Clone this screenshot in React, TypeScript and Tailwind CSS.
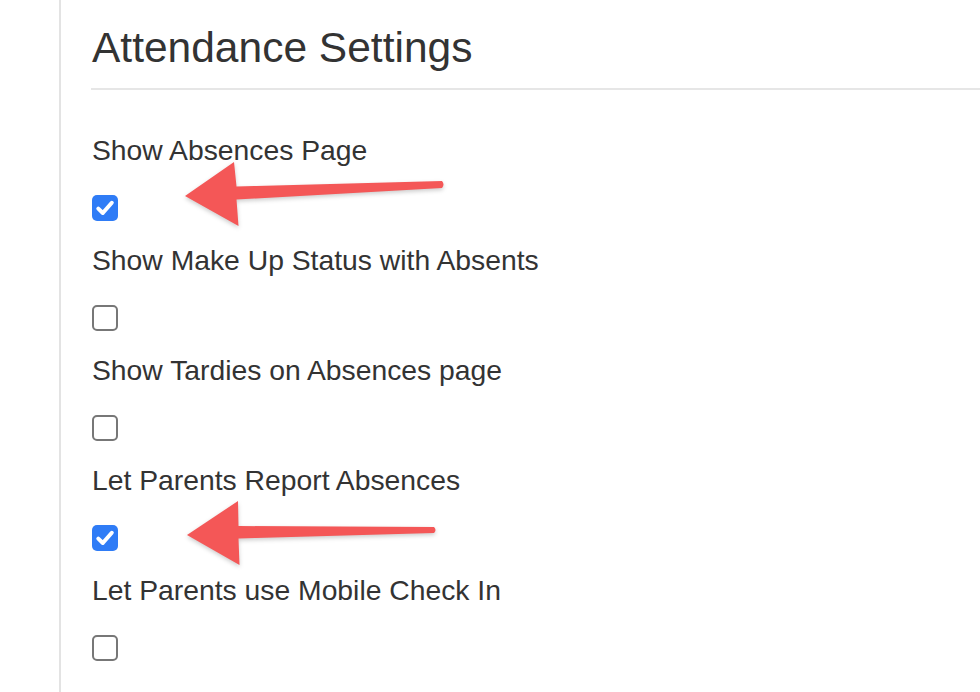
const settings = [
  { label: "Show Absences Page", checked: true },
  { label: "Show Make Up Status with Absents", checked: false },
  { label: "Show Tardies on Absences page", checked: false },
  { label: "Let Parents Report Absences", checked: true },
  { label: "Let Parents use Mobile Check In", checked: false },
];

const Checkbox = ({ checked }: { checked: boolean }) => {
  if (checked) {
    return (
      <div className="w-[26px] h-[26px] rounded-[5px] bg-[#2f7cf6] flex items-center justify-center">
        <svg width="26" height="26" viewBox="0 0 26 26">
          <path
            d="M6.3 13.6 L10.8 18 L19.8 7.8"
            fill="none"
            stroke="#fff"
            strokeWidth="4"
            strokeLinecap="round"
            strokeLinejoin="round"
          />
        </svg>
      </div>
    );
  }
  return <div className="w-[26px] h-[26px] rounded-[5px] border-2 border-[#777777] bg-white" />;
};

const Arrows = () => (
  <svg
    className="absolute inset-0 pointer-events-none drop-shadow-[0_2px_2px_rgba(0,0,0,0.2)]"
    width="980"
    height="692"
    viewBox="0 0 980 692"
  >
    {/* top arrow */}
    <path
      d="M185 196 L234 162 L236.5 186.5 L442 181 Q445 184.5 442 188 L236.5 199.5 L238.5 226 Z"
      fill="#f45757"
    />
    {/* bottom arrow */}
    <path
      d="M187 535 L238 501 L238.5 526 L434 527 Q437 530 434 533 L238.5 538.5 L239.5 565 Z"
      fill="#f45757"
    />
  </svg>
);

const App = () => {
  return (
    <main className="relative w-[980px] h-[692px] overflow-hidden bg-white font-['Liberation_Sans',Arial,sans-serif] text-[#333333]">
      <div className="ml-[59px] h-full border-l-2 border-[#e3e3e3] pl-[30px] pt-[24px]">
        <h1 className="ml-[1px] text-[42.5px] leading-[48px] font-normal">
          Attendance Settings
        </h1>
        <hr className="mt-[16px] border-0 h-[2px] bg-[#e6e6e6]" />
        <section className="mt-[40px] ml-[1px]">
          {settings.map((item) => (
            <div key={item.label} className="h-[110px]">
              <p className="text-[28.3px] leading-[40px]">{item.label}</p>
              <div className="mt-[25px]">
                <Checkbox checked={item.checked} />
              </div>
            </div>
          ))}
        </section>
      </div>
      <Arrows />
    </main>
  );
};
export default App;
